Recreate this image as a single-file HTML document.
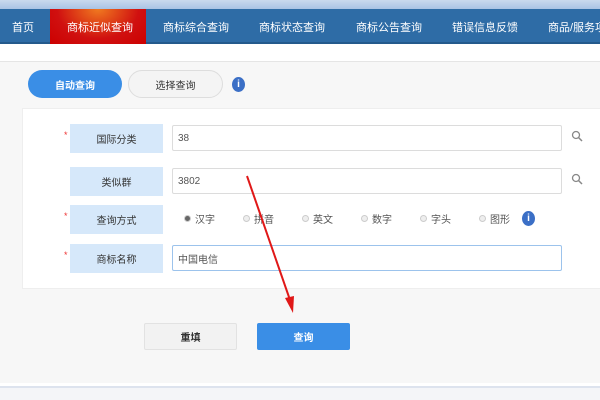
<!DOCTYPE html>
<html><head><meta charset="utf-8"><style>
*{margin:0;padding:0;box-sizing:border-box}
body{width:600px;height:400px;overflow:hidden;background:#fff;font-family:"Liberation Sans","Noto Sans CJK SC",sans-serif;font-size:11px;color:#333;position:relative}
.top{position:absolute;left:0;top:0;width:600px;height:9px;background:linear-gradient(#c9d9ee,#a9c3e4)}
.nav{position:absolute;left:0;top:9px;width:600px;height:35px;background:#2e6ca6;border-bottom:2px solid #245a8c}
.act{position:absolute;left:50px;top:9px;width:96px;height:35px;background:radial-gradient(ellipse at 50% 0,#f07a20,#d01010 60%,#c00 100%)}
.nv{position:absolute;top:9px;height:35px;display:flex;align-items:center;color:#fff;font-size:11px;white-space:nowrap}
.gray{position:absolute;left:0;top:61px;width:600px;height:322px;background:#f7f7f7;border-top:1px solid #e5e5e5}
.c{display:flex;align-items:center;justify-content:center}
.tab{position:absolute;top:70px;height:28px;border-radius:14px;font-size:10px}
.panel{position:absolute;left:22px;top:108px;width:580px;height:181px;background:#fff;border:1px solid #eee}
.lab{position:absolute;left:70px;width:93px;height:29px;background:#d6e8fa;font-size:10px}
.inp{position:absolute;left:172px;width:390px;height:26px;border:1px solid #dcdcdc;border-radius:2px;background:#fff;padding-left:5px;font-size:10px;color:#555;display:flex;align-items:center}
.star{position:absolute;left:64px;color:#e33;font-size:9px}
.mag{position:absolute;left:571px}
.rad{position:absolute;top:211px;font-size:10px;color:#555;display:flex;align-items:center;height:14px}
.rad i{display:inline-block;width:7px;height:7px;border-radius:50%;border:1px solid #ccc;background:#eee;margin-right:4px}
.info{position:absolute;width:13px;height:15px;border-radius:50%;background:#3b6fc6;color:#fff;font-size:10px;font-weight:bold}
.btn{position:absolute;top:323px;width:93px;height:27px;border-radius:2px;font-size:10px;font-weight:bold}
</style></head><body>
<div class="top"></div>
<div class="nav"></div>
<div class="act"></div>
<span class="nv" style="left:12px">首页</span>
<span class="nv" style="left:67px">商标近似查询</span>
<span class="nv" style="left:163px">商标综合查询</span>
<span class="nv" style="left:259px">商标状态查询</span>
<span class="nv" style="left:356px">商标公告查询</span>
<span class="nv" style="left:452px">错误信息反馈</span>
<span class="nv" style="left:548px">商品/服务项</span>
<div class="gray"></div>
<div class="tab c" style="left:28px;width:94px;background:#3a8ee6;color:#fff;font-weight:bold">自动查询</div>
<div class="tab c" style="left:128px;width:95px;background:#f4f4f4;border:1px solid #ddd">选择查询</div>
<div class="info c" style="left:232px;top:77px">i</div>
<div class="panel"></div>
<span class="star" style="top:130px">*</span><div class="lab c" style="top:124px">国际分类</div><div class="inp" style="top:125px">38</div>
<svg class="mag" style="top:130px" width="12" height="12"><circle cx="5" cy="5" r="3.5" fill="none" stroke="#888" stroke-width="1.3"/><line x1="7.5" y1="7.5" x2="11" y2="11" stroke="#888" stroke-width="1.5"/></svg>
<div class="lab c" style="top:167px">类似群</div><div class="inp" style="top:168px">3802</div>
<svg class="mag" style="top:173px" width="12" height="12"><circle cx="5" cy="5" r="3.5" fill="none" stroke="#888" stroke-width="1.3"/><line x1="7.5" y1="7.5" x2="11" y2="11" stroke="#888" stroke-width="1.5"/></svg>
<span class="star" style="top:211px">*</span><div class="lab c" style="top:205px">查询方式</div>
<span class="rad" style="left:184px"><i style="background:#666;border-color:#ccc"></i>汉字</span>
<span class="rad" style="left:243px"><i></i>拼音</span>
<span class="rad" style="left:302px"><i></i>英文</span>
<span class="rad" style="left:361px"><i></i>数字</span>
<span class="rad" style="left:420px"><i></i>字头</span>
<span class="rad" style="left:479px"><i></i>图形</span>
<div class="info c" style="left:522px;top:211px">i</div>
<span class="star" style="top:250px">*</span><div class="lab c" style="top:244px">商标名称</div><div class="inp" style="top:245px;border-color:#9cc3ec">中国电信</div>
<div class="btn c" style="left:144px;background:#f2f2f2;border:1px solid #e2e2e2;color:#333">重填</div>
<div class="btn c" style="left:257px;background:#3a8ee6;color:#fff">查询</div>
<div style="position:absolute;left:0;top:386px;width:600px;height:2px;background:#dde3ee"></div>
<div style="position:absolute;left:0;top:388px;width:600px;height:12px;background:#f4f5f8"></div>
<svg style="position:absolute;left:0;top:0" width="600" height="400"><line x1="247" y1="176" x2="290" y2="300" stroke="#e01818" stroke-width="2"/><polygon points="293,313 285,298 294,296" fill="#e01818"/></svg>
</body></html>
